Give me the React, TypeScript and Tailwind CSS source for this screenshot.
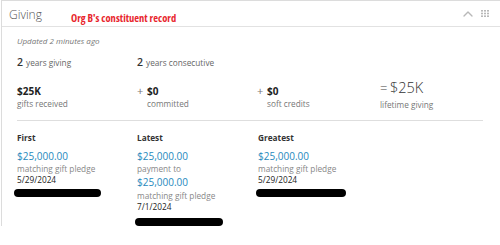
import { ChevronUp } from 'lucide-react'

const stats = [
  { op: '', amount: '$25K', label: 'gifts received', w: 'w-[120px]' },
  { op: '+', amount: '$0', label: 'committed', w: 'w-[120px]' },
  { op: '+', amount: '$0', label: 'soft credits', w: 'w-[123px]' },
]

function Redacted({ w }: { w: string }) {
  return <div className={`h-[8px] rounded-full bg-black ${w}`} />
}

function GridIcon() {
  return (
    <svg width="8" height="7" viewBox="0 0 8 7" className="fill-[#b8b8b8]">
      {[0, 3, 6].map((x) =>
        [0, 2.7, 5.4].map((y) => <rect key={`${x}-${y}`} x={x} y={y} width="2" height="1.6" />)
      )}
    </svg>
  )
}

function Amount({ children, className = '' }: { children: string; className?: string }) {
  return <div className={`text-[10px] leading-[14px] text-[#2789bd] ${className}`}>{children}</div>
}

function Label({ children, className = '' }: { children: string; className?: string }) {
  return <div className={`text-[8.25px] leading-[11px] text-[#888] ${className}`}>{children}</div>
}

function DateLine({ children }: { children: string }) {
  return <div className="text-[8.25px] leading-[12px] text-[#222]">{children}</div>
}

export default function App() {
  return (
    <div className="h-[245px] w-[500px] overflow-hidden bg-white font-['Open_Sans',sans-serif]">
      <div className="ml-[1px] border-l border-t border-[#dcdcdc]">
        {/* header */}
        <div className="flex h-[26px] items-start border-b border-[#e2e2e2] pl-[7px] pr-[11px]">
          <span className="mt-[6px] text-[12px] font-light leading-[16px] text-[#555]">Giving</span>
          <span className="ml-[29px] mt-[10px] text-[10.5px] font-bold leading-[14px] font-stretch-condensed text-[#e8262d]">
            Org B's constituent record
          </span>
          <div className="ml-auto flex items-center gap-[5px] self-center">
            <ChevronUp size={16} strokeWidth={2} className="text-[#b8b8b8]" />
            <GridIcon />
          </div>
        </div>

        <div className="pl-[15px] pt-[8px]">
          <div className="text-[8px] italic leading-[11px] text-[#777]">Updated 2 minutes ago</div>

          {/* years */}
          <div className="mt-[9px] flex text-[#333]">
            <div className="flex w-[120px] items-baseline gap-[3px] leading-[15px]">
              <span className="text-[10.5px] font-semibold">2</span>
              <span className="text-[8.25px] text-[#666]">years giving</span>
            </div>
            <div className="flex items-baseline gap-[3px] leading-[15px]">
              <span className="text-[10.5px] font-semibold">2</span>
              <span className="text-[8.25px] text-[#666]">years consecutive</span>
            </div>
          </div>

          {/* totals */}
          <div className="mt-[15px] flex">
            {stats.map((s) => (
              <div key={s.label} className={`flex ${s.w}`}>
                {s.op && <span className="-mt-[1px] w-[10px] text-[11px] leading-[13px] text-[#777]">{s.op}</span>}
                <div>
                  <div className="text-[10px] font-bold leading-[13px] text-[#222]">{s.amount}</div>
                  <div className="text-[8.25px] leading-[11px] text-[#777]">{s.label}</div>
                </div>
              </div>
            ))}
            <div className="-mt-[7px]">
              <div className="flex items-baseline leading-[19px]">
                <span className="w-[10px] text-[13px] font-light text-[#444]">=</span>
                <span className="text-[14.5px] font-light text-[#333]">$25K</span>
              </div>
              <div className="mt-[1px] text-[8.25px] leading-[11px] text-[#777]">lifetime giving</div>
            </div>
          </div>

          <div className="mt-[10px] w-[466px] border-t border-[#dedede]" />

          {/* first / latest / greatest */}
          <div className="mt-[11px] flex">
            <div className="w-[120px]">
              <div className="text-[8.25px] font-bold leading-[11px] text-[#333]">First</div>
              <Amount className="mt-[6px]">$25,000.00</Amount>
              <Label>matching gift pledge</Label>
              <DateLine>5/29/2024</DateLine>
              <div className="-ml-[3px] mt-[3px]">
                <Redacted w="w-[87px]" />
              </div>
            </div>
            <div className="w-[121px]">
              <div className="text-[8.25px] font-bold leading-[11px] text-[#333]">Latest</div>
              <Amount className="mt-[6px]">$25,000.00</Amount>
              <Label>payment to</Label>
              <Amount className="mt-[1px]">$25,000.00</Amount>
              <Label className="mt-[1px]">matching gift pledge</Label>
              <DateLine>7/1/2024</DateLine>
              <div className="-ml-[2px] mt-[5px]">
                <Redacted w="w-[88px]" />
              </div>
            </div>
            <div>
              <div className="text-[8.25px] font-bold leading-[11px] text-[#333]">Greatest</div>
              <Amount className="mt-[6px]">$25,000.00</Amount>
              <Label>matching gift pledge</Label>
              <DateLine>5/29/2024</DateLine>
              <div className="-ml-[2px] mt-[3px]">
                <Redacted w="w-[90px]" />
              </div>
            </div>
          </div>
        </div>
      </div>
    </div>
  )
}
